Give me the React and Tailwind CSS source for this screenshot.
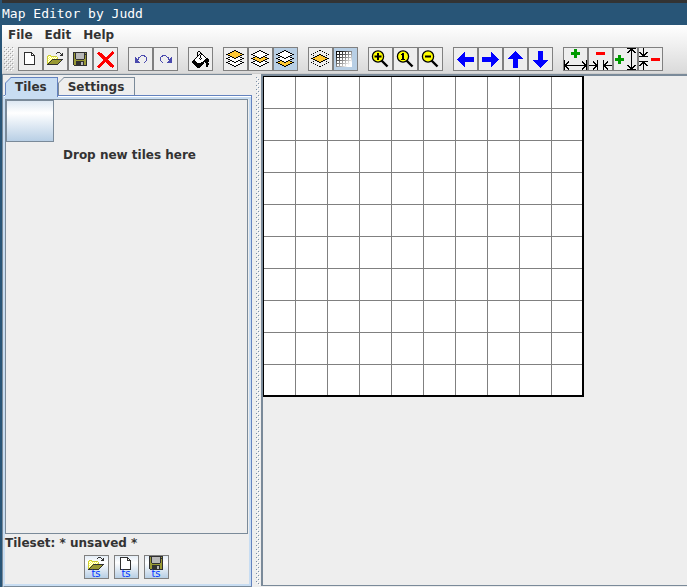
import { Fragment, useState } from "react";

const INK = {
  "#": "#000000",
  k: "#303030",
  o: "#666600",
  O: "#999933",
  y: "#cccc33",
  Y: "#ffff55",
  w: "#ffffff",
  g: "#b8b8b8",
  b: "#4a4aae",
  A: "#ffc833",
};

// Draws a bitmap icon; each character is one pixel, "." is transparent.
function Pixels({ rows, x, y }) {
  return rows.map((row, j) =>
    [...row].map((c, i) =>
      INK[c] ? <rect key={`${i}-${j}`} x={x + i} y={y + j} width="1" height="1" fill={INK[c]} /> : null
    )
  );
}

const FOLDER = [
  "..........kkk...",
  ".........k...k.k",
  "..............kk",
  ".yyy.........kkk",
  "yYwYyyyyyy......",
  "ywYwYwYwYwy.....",
  "yYwYwYwYwYy.....",
  "ywYwYkkkkkkkkkkk",
  "yYwYkOOOOOOOOOk.",
  "ywYkOOOOOOOOOk..",
  "yYkOOOOOOOOOk...",
  "ykOOOOOOOOOk....",
  "kkkkkkkkkkk.....",
];

const FLOPPY = [
  "kkkkkkkkkkkkkk",
  "kOkggggggggkOk",
  "kOkggggggggkkk",
  "kOkggggggggkOk",
  "kOkggggggggkOk",
  "kOkggggggggkOk",
  "kOkggggggggkOk",
  "kOOkkkkkkkkOOk",
  "kOOOOOOOOOOOOk",
  "kOOkkkkkkkkOOk",
  "kOOkkkkkggkOOk",
  "kOOkkkkkggkOOk",
  "kOOkkkkkggkOOk",
  ".kkkkkkkkkkkkk",
];

const PAGE = [
  "kkkkkkkk...",
  "kwwwwwwkk..",
  "kwwwwwwkwk.",
  "kwwwwwwkkkk",
  "kwwwwwwwwwk",
  "kwwwwwwwwwk",
  "kwwwwwwwwwk",
  "kwwwwwwwwwk",
  "kwwwwwwwwwk",
  "kwwwwwwwwwk",
  "kwwwwwwwwwk",
  "kwwwwwwwwwk",
  "kkkkkkkkkkk",
];

const UNDO = [
  "......bbbb...",
  ".....b...bb..",
  "b..bb......b.",
  "bb.b.......b.",
  "bbbb.......b.",
  "bbb........b.",
  "bbbb......b..",
  "bbbbb....b...",
];

const REDO = UNDO.map((r) => [...r].reverse().join(""));

const BUCKET = [
  "......##.........",
  ".....#..#........",
  ".....#..##.......",
  ".....#.#w##......",
  ".....##w#ww#.....",
  ".....#ww#www#....",
  "....#www#wwww#...",
  "...#www#w#wwww##.",
  "..#wwwww#wwww####",
  ".##wwwwwwwww#####",
  "####wwwwwww######",
  "#####wwww###.###",
  ".###########..###",
  "..#########...###",
  "...#######....##.",
  "....#####.....##.",
  ".....###.........",
];

function Diamond({ y, fill, dotted }) {
  const out = [];
  for (let r = 0; r < 9; r++) {
    const d = r < 5 ? r : 8 - r;
    const l = 11 - 2 * d;
    const rr = 11 + 2 * d;
    if (fill && d > 0) out.push(<rect key={`f${r}`} x={l + 2} y={y + r} width={rr - l - 2} height="1" fill={fill} />);
    out.push(<rect key={`l${r}`} x={l} y={y + r} width={dotted ? 1 : 2} height="1" />);
    out.push(<rect key={`r${r}`} x={dotted ? rr + 1 : rr} y={y + r} width={dotted ? 1 : 2} height="1" />);
  }
  return out;
}

function Layers({ active }) {
  return [2, 1, 0].map((n) => (
    <Fragment key={n}>
      <Diamond y={3 + 4 * n} fill={n === active ? INK.A : "#ffffff"} />
    </Fragment>
  ));
}

function Magnifier({ children }) {
  return (
    <>
      <path d="M13 13 L19.500 19.500" stroke="#000" strokeWidth="2.4" fill="none" />
      <circle cx="10" cy="9.5" r="5.6" fill="#ffff00" stroke="#000" strokeWidth="1.3" />
      {children}
    </>
  );
}

function GridIcon() {
  const cells = [];
  for (let j = 0; j < 5; j++)
    for (let i = 0; i < 5; i++)
      cells.push(<rect key={`${i}${j}`} x={4 + 3 * i} y={5 + 3 * j} width="2" height="2" fill="#fff" />);
  return (
    <>
      <defs>
        <linearGradient id="fade" x1="0" y1="0" x2="1" y2="1">
          <stop offset="0" stopColor="#000" />
          <stop offset="0.2" stopColor="#222" />
          <stop offset="0.85" stopColor="#fff" />
        </linearGradient>
      </defs>
      <rect x="3" y="4" width="16" height="16" fill="url(#fade)" />
      {cells}
    </>
  );
}

const blue = (d) => <path d={d} fill="#0000ff" />;
const line = (d) => <path d={d} fill="none" stroke="#000" strokeWidth="1" />;
const green = (d) => <path d={d} fill="#009a00" />;
const red = (d) => <path d={d} fill="#ff0000" />;

const GROUPS = [
  [
    { label: "New map", art: <Pixels rows={PAGE} x={6} y={5} /> },
    { label: "Open map", art: <Pixels rows={FOLDER} x={4} y={5} /> },
    { label: "Save map", art: <Pixels rows={FLOPPY} x={5} y={5} /> },
    { label: "Clear", art: <path d="M5 5.500 L20.500 20 M20.500 5 L5 20.500" stroke="#ff0000" strokeWidth="3.4" fill="none" /> },
  ],
  [
    { label: "Undo", art: <Pixels rows={UNDO} x={7} y={8} /> },
    { label: "Redo", art: <Pixels rows={REDO} x={6} y={8} /> },
  ],
  [{ label: "Fill", art: <Pixels rows={BUCKET} x={4} y={4} /> }],
  [
    { label: "Top layer", art: <Layers active={0} /> },
    { label: "Middle layer", art: <Layers active={1} /> },
    { label: "Bottom layer", on: true, art: <Layers active={2} /> },
  ],
  [
    {
      label: "Hide other layers",
      art: (
        <>
          <Diamond y={11} dotted />
          <Diamond y={3} dotted />
          <Diamond y={7} fill={INK.A} />
        </>
      ),
    },
    { label: "Show grid", on: true, art: <GridIcon /> },
  ],
  [
    { label: "Zoom in", smooth: true, art: <Magnifier><path d="M9 6h2v2.500h2.500v2h-2.500v2.500h-2v-2.500h-2.500v-2h2.500z" /></Magnifier> },
    { label: "Actual size", smooth: true, art: <Magnifier><path d="M9 6h2v6h1v1h-4v-1h1v-4h-1v-1h1z" /></Magnifier> },
    { label: "Zoom out", smooth: true, art: <Magnifier><path d="M7 8.500h6v2h-6z" /></Magnifier> },
  ],
  [
    { label: "Shift left", art: blue("M4 12.500 L12 5V10H21V15H12V20Z") },
    { label: "Shift right", art: blue("M21 12.500 L13 5V10H4V15H13V20Z") },
    { label: "Shift up", art: blue("M12.500 4 L20 12H15V21H10V12H5Z") },
    { label: "Shift down", art: blue("M12.500 21 L20 13H15V4H10V13H5Z") },
  ],
  [
    {
      label: "Add column",
      art: <>{green("M11 2h3v3h3v3h-3v3h-3v-3h-3v-3h3z")}{line("M1.500 13V23M23.500 13V23M2 18.500H23M6 14.500L2 18.500L6 22.500M19 14.500L23 18.500L19 22.500")}</>,
    },
    {
      label: "Remove column",
      art: <>{red("M8 5h9v3H8z")}{line("M9.500 13V23M15.500 13V23M1 18.500H9M16 18.500H24M5 14.500L9 18.500L5 22.500M20 14.500L16 18.500L20 22.500")}</>,
    },
    {
      label: "Add row",
      art: <>{green("M5 8h3v3h3v3h-3v3h-3v-3h-3v-3h3z")}{line("M14 1.500H23M14 22.500H23M18.500 2V22M14.500 6L18.500 2L22.500 6M14.500 18L18.500 22L22.500 18")}</>,
    },
    {
      label: "Remove row",
      art: <>{red("M13 11h9v3h-9z")}{line("M1 9.500H10M1 14.500H10M5.500 1V9M5.500 15V23M1.500 5L5.500 9L9.500 5M1.500 19L5.500 15L9.500 19")}</>,
    },
  ],
];

const TILESET = [
  { label: "Open tileset", art: <Pixels rows={FOLDER} x={4} y={2} /> },
  { label: "New tileset", art: <Pixels rows={PAGE} x={6} y={2} /> },
  { label: "Save tileset", art: <Pixels rows={FLOPPY} x={5} y={1} /> },
];

function Art({ smooth, children }) {
  return (
    <svg viewBox="1 1 23 22" className="block h-full w-full" shapeRendering={smooth ? "auto" : "crispEdges"} aria-hidden="true">
      {children}
    </svg>
  );
}

function Bumps({ id, color }) {
  return (
    <svg className="block h-full w-full" shapeRendering="crispEdges" aria-hidden="true">
      <defs>
        <pattern id={id} width="4" height="4" patternUnits="userSpaceOnUse">
          <rect x="0" y="0" width="1" height="1" fill={color} />
          <rect x="2" y="2" width="1" height="1" fill={color} />
          <rect x="1" y="1" width="1" height="1" fill="#fff" />
          <rect x="3" y="3" width="1" height="1" fill="#fff" />
        </pattern>
      </defs>
      <rect width="100%" height="100%" fill={`url(#${id})`} />
    </svg>
  );
}

function Tab({ selected, onClick, children }) {
  return (
    <button
      role="tab"
      aria-selected={selected}
      onClick={onClick}
      className={
        "relative border-t border-r px-[10px] font-bold whitespace-nowrap " +
        (selected
          ? "z-10 -mb-[2px] h-5 border-[#6382bf] bg-[#c8ddf2] pb-px"
          : "h-[18px] border-[#7a8a99] bg-[#eeeeee]")
      }
    >
      <svg className="absolute -top-px left-0 h-[18px] w-[6px]" viewBox="0 0 6 18" aria-hidden="true">
        <path d="M0 0H6L0 6Z" fill="#eeeeee" />
        <path d="M6 0.500L0.500 6V18" fill="none" stroke={selected ? "#6382bf" : "#7a8a99"} />
      </svg>
      {children}
    </button>
  );
}

export default function App() {
  const [tab, setTab] = useState("Tiles");
  return (
    <div className="flex h-screen flex-col overflow-hidden border-l-2 border-[#285577] bg-[#eeeeee] font-['DejaVu_Sans',sans-serif] text-[12px] leading-4 text-[#333333]">
      <header className="-ml-[2px] h-[25px] shrink-0 border-t-3 border-[#333333] bg-[#285577] pl-[2px] font-['DejaVu_Sans_Mono',monospace] text-[13px] leading-[22px] text-white">
        Map Editor by Judd
      </header>

      <div className="shrink-0 border-b border-[#cccccc] bg-linear-to-b from-white to-[#dadada]">
        <nav className="flex h-[22px] items-start gap-[12px] pl-[6px] font-bold">
          {["File", "Edit", "Help"].map((m) => (
            <button key={m} className="leading-5">
              {m}
            </button>
          ))}
        </nav>
        <div role="toolbar" className="flex h-[26px] gap-[10px] pl-[2px]">
          <div className="-mr-[6px] h-6 w-[10px]">
            <Bumps id="grip" color="#a0a0a0" />
          </div>
          {GROUPS.map((group, g) => (
            <div key={g} className="flex">
              {group.map((b) => (
                <button
                  key={b.label}
                  aria-label={b.label}
                  className={"h-6 w-[25px] border border-[#808080] " + (b.on ? "bg-[#b8cfe5]" : "bg-[#eeeeee]")}
                >
                  <Art smooth={b.smooth}>{b.art}</Art>
                </button>
              ))}
            </div>
          ))}
        </div>
      </div>

      <main className="flex min-h-0 grow">
        <section className="flex w-[250px] shrink-0 flex-col border-t border-l border-[#7a8a99]">
          <div role="tablist" className="flex h-5 shrink-0 items-end pl-[2px]">
            {["Tiles", "Settings"].map((t) => (
              <Tab key={t} selected={tab === t} onClick={() => setTab(t)}>
                {t}
              </Tab>
            ))}
          </div>
          <div className="flex min-h-0 grow flex-col border border-t-[#6382bf] border-r-[#6382bf] border-b-[#7a8a99] border-l-[#c8ddf2] bg-[#c8ddf2] pt-[3px] pr-[2px] pb-[2px] pl-px shadow-[inset_0_1px_0_#ffffff]">
            <div className="flex min-h-0 grow flex-col bg-[#eeeeee]">
              <div className="mr-px flex min-h-0 grow items-start gap-[9px] border border-[#7a8a99]">
                <button
                  aria-label="Tile"
                  className="h-[42px] w-[48px] shrink-0 border border-[#7a8a99] bg-linear-to-b from-[#dde8f3] via-white via-30% to-[#b8cfe5]"
                />
                <p className="mt-[47px] font-bold whitespace-nowrap">Drop new tiles here</p>
              </div>
              <p className="pt-px font-bold">Tileset: * unsaved *</p>
              <div className="flex justify-center gap-[5px] pt-1 pr-px pb-[5px]">
                {TILESET.map((b) => (
                  <button
                    key={b.label}
                    aria-label={b.label}
                    className="h-6 w-[25px] border border-[#808080] bg-linear-to-b from-[#e4edf6] via-white via-30% to-[#b8cfe5]"
                  >
                    <Art>
                      {b.art}
                      <text x="12" y="22" textAnchor="middle" fill="#0033ff" fontSize="10" className="font-['DejaVu_Sans',sans-serif]">
                        ts
                      </text>
                    </Art>
                  </button>
                ))}
              </div>
            </div>
          </div>
        </section>

        <div role="separator" className="w-[9px] shrink-0 pt-[3px] pr-px pb-[2px] pl-1">
          <Bumps id="divider" color="#7a8fa8" />
        </div>

        <section className="mb-px grow border-t-2 border-b border-l-2 border-[#7a8a99]">
          <div className="grid w-fit grid-cols-[repeat(9,31px)_30px] grid-rows-[repeat(9,31px)_30px] gap-px border-t border-r-2 border-b-2 border-l border-black bg-[#808080]">
            {Array.from({ length: 100 }, (_, i) => (
              <div key={i} className="bg-white" />
            ))}
          </div>
        </section>
      </main>
    </div>
  );
}
